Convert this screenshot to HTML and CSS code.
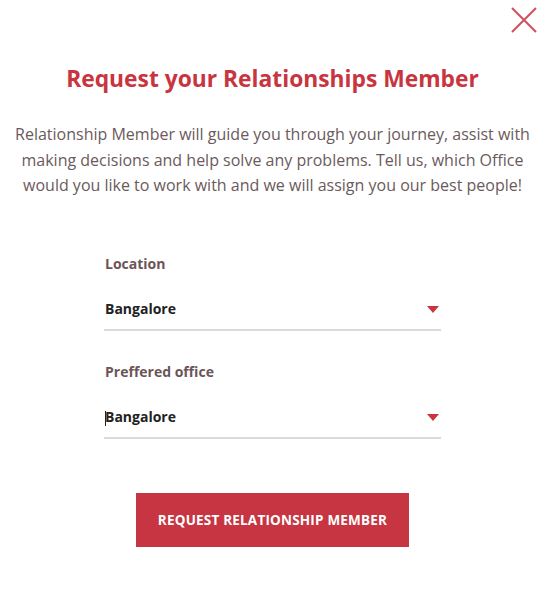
FILE: index.html
```html
<!DOCTYPE html>
<html lang="en">

<head>
    <meta charset="UTF-8">
    <meta name="viewport" content="width=device-width, initial-scale=1.0">
    <title>Request your Relationships Member</title>
    <link rel="stylesheet" href="styles.css">
</head>

<body>

    <div class="modal">
        <button class="close-btn" type="button" aria-label="Close">
            <svg width="26" height="26" viewBox="0 0 26 26">
                <path d="M1 1 L25 25 M25 1 L1 25" stroke="#d0505b" stroke-width="2" fill="none" />
            </svg>
        </button>

        <h2 class="title">Request your Relationships Member</h2>

        <p class="intro">Relationship Member will guide you through your journey, assist with making decisions and help
            solve any problems. Tell us, which Office would you like to work with and we will assign you our best
            people!</p>

        <form class="rm-form">
            <div class="field">
                <label for="location">Location</label>
                <div class="select-wrap">
                    <select id="location" name="location">
                        <option>Bangalore</option>
                    </select>
                    <span class="arrow"></span>
                </div>
            </div>

            <div class="field">
                <label for="office">Preffered office</label>
                <div class="select-wrap">
                    <span class="caret"></span>
                    <select id="office" name="office">
                        <option>Bangalore</option>
                    </select>
                    <span class="arrow"></span>
                </div>
            </div>

            <button class="submit-btn" type="submit">Request relationship member</button>
        </form>
    </div>

</body>

</html>
```

FILE: styles.css
```css
body {
    margin: 0;
    font-family: 'Open Sans', 'Noto Sans', sans-serif;
    background: white;
}

.modal {
    position: relative;
    width: 545px;
    height: 600px;
    padding-top: 64px;
    box-sizing: border-box;
}

.close-btn {
    position: absolute;
    top: 7px;
    right: 8px;
    padding: 0;
    border: none;
    background: none;
    cursor: pointer;
}

.close-btn svg {
    display: block;
}

.title {
    margin: 0;
    text-align: center;
    font-size: 22.8px;
    font-weight: 700;
    color: #c8353f;
    line-height: 30px;
}

.intro {
    margin: 28px 0 0;
    padding: 0 4px;
    text-align: center;
    font-size: 16px;
    line-height: 25.5px;
    color: #6b5a5b;
}

.rm-form {
    width: 337px;
    margin: 56px auto 0;
    display: flex;
    flex-direction: column;
}

.field {
    display: flex;
    flex-direction: column;
    margin-bottom: 32px;
}

.field label {
    padding-left: 1px;
    font-size: 14px;
    font-weight: 700;
    color: #6b5558;
    line-height: 18px;
}

.select-wrap {
    position: relative;
    margin-top: 20px;
    border-bottom: 2px solid #dadada;
}

.select-wrap select {
    width: 100%;
    padding: 6px 0 11px 1px;
    border: none;
    background: transparent;
    appearance: none;
    -webkit-appearance: none;
    font-family: inherit;
    font-size: 14px;
    font-weight: 700;
    color: #222;
    outline: none;
}

.arrow {
    position: absolute;
    right: 2px;
    top: 13px;
    width: 0;
    height: 0;
    border-left: 6px solid transparent;
    border-right: 6px solid transparent;
    border-top: 7px solid #c8353f;
    pointer-events: none;
}

.caret {
    position: absolute;
    left: 1px;
    top: 10px;
    width: 1px;
    height: 15px;
    background: #222;
}

.submit-btn {
    align-self: center;
    width: 273px;
    height: 54px;
    margin-top: 22px;
    border: none;
    background-color: #c73542;
    color: white;
    font-family: inherit;
    font-size: 13.5px;
    font-weight: 700;
    letter-spacing: 0.2px;
    text-transform: uppercase;
    cursor: pointer;
}
```
